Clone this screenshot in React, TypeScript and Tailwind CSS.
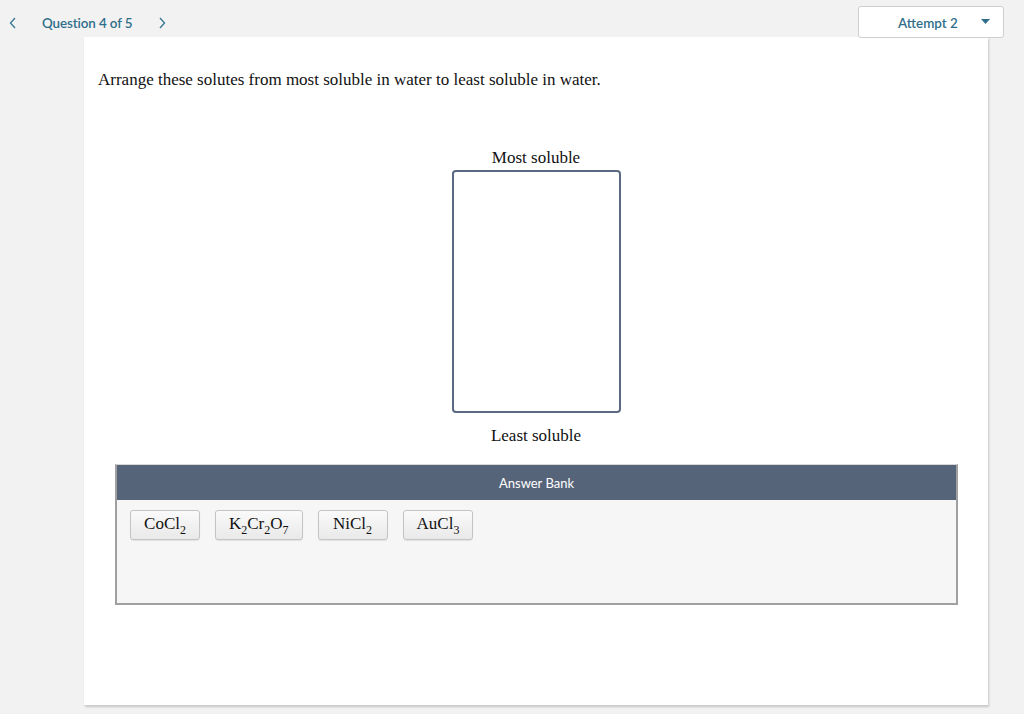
import React from "react";

const serif = { fontFamily: '"Liberation Serif", "Times New Roman", serif' };

function Chip({ children }: { children: React.ReactNode }) {
  return (
    <div
      className="h-[30px] min-w-[70px] px-[13px] flex items-center justify-center border border-[#c4c4c4] rounded-[3px] bg-gradient-to-b from-[#fafafa] to-[#e9e9e9] text-[17px] leading-[18px] text-[#111] shadow-[0_1px_1px_rgba(0,0,0,0.08)]"
      style={serif}
    >
      <span className="mt-[-3px]">{children}</span>
    </div>
  );
}

const Sub = ({ n }: { n: string }) => (
  <span className="inline-block text-[12px] translate-y-[5px] leading-none">{n}</span>
);

export default function App() {
  return (
    <div className="w-[1024px] h-[714px] bg-[#f2f2f2] overflow-hidden relative" style={{ fontFamily: 'Lato, "Open Sans", sans-serif' }}>
      {/* header */}
      <div className="h-[37px] flex items-start">
        <div className="flex items-center h-[46px] pl-[8px]">
          <svg width="10" height="14" viewBox="0 0 10 14">
            <path d="M7 2 L2.5 7 L7 12" stroke="#3d7a96" strokeWidth="1.4" fill="none" />
          </svg>
          <span className="ml-[24px] text-[13.4px] font-semibold text-[#2f6e8a] tracking-[-0.1px]">Question 4 of 5</span>
          <svg width="10" height="14" viewBox="0 0 10 14" className="ml-[24px]">
            <path d="M3 2 L7.5 7 L3 12" stroke="#3d7a96" strokeWidth="1.4" fill="none" />
          </svg>
        </div>
        <div className="ml-auto mr-[20px] mt-[6px] w-[146px] h-[32px] bg-white border border-[#cfcfcf] rounded-[3px] flex items-center">
          <span className="ml-[39px] mt-[2px] text-[13.4px] font-semibold text-[#2f6e8a]">Attempt 2</span>
          <svg width="9" height="6" viewBox="0 0 9 6" className="ml-[23px]">
            <path d="M0 0 L9 0 L4.5 5 Z" fill="#2f6e8a" />
          </svg>
        </div>
      </div>

      {/* card */}
      <div className="ml-[84px] w-[904px] h-[668px] bg-white shadow-[1px_2px_2px_rgba(0,0,0,0.18)] pt-[31px] flex flex-col">
        <p className="ml-[14px] text-[17px] text-[#111] leading-[24px]" style={serif}>
          Arrange these solutes from most soluble in water to least soluble in water.
        </p>

        <div className="flex flex-col items-center mt-[55px]">
          <div className="text-[17px] text-[#111] leading-[22px]" style={serif}>Most soluble</div>
          <div className="mt-[1px] w-[169px] h-[243px] border-2 border-[#5a6880] rounded-[4px] bg-white" />
          <div className="mt-[12px] text-[17px] text-[#111] leading-[22px]" style={serif}>Least soluble</div>
        </div>

        <div className="mt-[17px] ml-[31px] w-[843px] h-[141px] border-2 border-[#a0a0a0] border-t-[#d8d8d8] border-t bg-[#f6f6f6] flex flex-col">
          <div className="h-[35px] bg-[#56647a] flex items-center justify-center text-white text-[13px] pt-[2px]">Answer Bank</div>
          <div className="flex gap-[15px] pl-[13px] pt-[10px]">
            <Chip>CoCl<Sub n="2" /></Chip>
            <Chip>K<Sub n="2" />Cr<Sub n="2" />O<Sub n="7" /></Chip>
            <Chip>NiCl<Sub n="2" /></Chip>
            <Chip>AuCl<Sub n="3" /></Chip>
          </div>
        </div>
      </div>
    </div>
  );
}
